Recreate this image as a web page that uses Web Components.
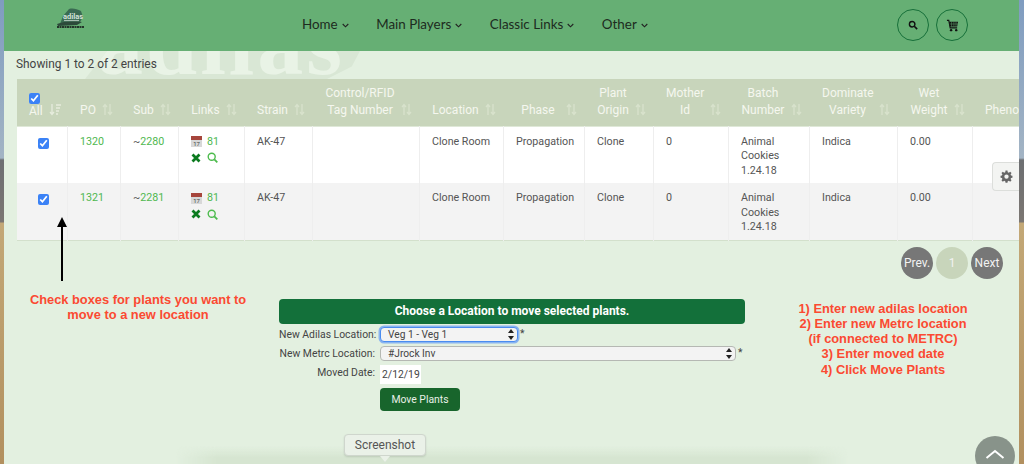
<!DOCTYPE html>
<html>
<head>
<meta charset="utf-8">
<title>Move plants</title>
<style>
  html, body { margin: 0; height: 464px; overflow: hidden; }
  body {
    background: linear-gradient(to bottom, #7f9cc0 0, #a3b4c4 158px, #6d6f72 160px, #7b7672 222px, #c3a877 223px, #b2905f 464px);
    font-family: Roboto, sans-serif;
  }
</style>
</head>
<body>
<app-shell>
  <top-nav slot="nav"></top-nav>
  <span slot="count">Showing 1 to 2 of 2 entries</span>
  <plant-table slot="table"></plant-table>
  <page-buttons slot="pager"></page-buttons>
  <red-note slot="left">Check boxes for plants you want to<br>move to a new location</red-note>
  <move-form slot="form"></move-form>
  <red-note slot="right" style="padding:9px 18px 0 0">1) Enter new adilas location<br>2) Enter new Metrc location<br>(if connected to METRC)<br>3) Enter moved date<br>4) Click Move Plants</red-note>
</app-shell>

<script>
// main frame, with the things that float over it
class AppShell extends HTMLElement {
  constructor() {
    super();
    this.attachShadow({ mode: "open" });
    this.shadowRoot.innerHTML = `
    <style>
      :host {
        display: block;
        position: relative;
        margin-left: 4px;
        width: 1015px;
        height: 464px;
        overflow: hidden;
        background: #e3f0e0;
      }
      .mark {
        position: absolute;
        left: 81px;
        top: 51px;
        width: 275px;
        height: 28px;
        overflow: hidden;
        background: #d9e7d5;
        clip-path: polygon(0 100%, 8% 0, 100% 0, 97% 55%, 88% 100%);
      }
      .mark span {
        position: absolute;
        left: 12px;
        top: -54px;
        font: bold 92px/92px "Liberation Serif", serif;
        letter-spacing: 3px;
        color: #e9f3e6;
      }
      .ground {
        position: absolute;
        left: 172px;
        top: 446px;
        width: 672px;
        height: 18px;
        background: linear-gradient(to bottom, rgba(214,229,209,0), #d6e5d1 65%);
        -webkit-mask-image: linear-gradient(to right, transparent, #000 6%, #000 94%, transparent);
      }
      .page { position: relative; }
      .count {
        padding: 6px 0 0 12px;
        height: 22px;
        font-size: 11.900px;
        line-height: 15px;
        color: #444;
      }
      .table { margin-left: 13px; }
      .pager { display: flex; justify-content: flex-end; padding: 6px 16px 0 0; }
      .lower {
        display: grid;
        grid-template-columns: 242px 466px 1fr;
        column-gap: 20px;
        margin: 13px 0 0 13px;
      }
      .arrow { position: absolute; left: 49px; top: 216px; }
      .gear {
        position: absolute;
        right: 0;
        top: 162px;
        width: 26px;
        height: 27px;
        display: flex;
        align-items: center;
        justify-content: center;
        background: #f3f4f2;
        border: 1px solid #dcdedb;
        border-right: 0;
        border-radius: 4px 0 0 4px;
      }
      .up {
        position: absolute;
        left: 971px;
        top: 436px;
        width: 40px;
        height: 40px;
        border-radius: 50%;
        background: #88938a;
        display: flex;
        justify-content: center;
      }
      .tip {
        position: absolute;
        left: 340px;
        top: 434px;
        width: 80px;
        height: 20px;
        line-height: 20px;
        text-align: center;
        font-size: 12px;
        color: #555;
        background: #eaf1e8;
        border: 1px solid #cfd6cd;
        border-radius: 4px;
        box-shadow: 0 1px 2px rgba(0,0,0,.12);
      }
      .tip::after {
        content: "";
        position: absolute;
        left: 35px;
        top: 21px;
        border: 5px solid transparent;
        border-top: 6px solid #eaf1e8;
        border-bottom: 0;
      }
    </style>
    <div class="mark"><span>adilas</span></div>
    <div class="ground"></div>
    <div class="page">
      <slot name="nav"></slot>
      <div class="count"><slot name="count"></slot></div>
      <div class="table"><slot name="table"></slot></div>
      <div class="pager"><slot name="pager"></slot></div>
      <div class="lower">
        <slot name="left"></slot>
        <slot name="form"></slot>
        <slot name="right"></slot>
      </div>
    </div>
    <svg class="arrow" width="18" height="66" viewBox="0 0 18 66">
      <path d="M9 1 L14 11 L10 11 L10 65 L8 65 L8 11 L4 11 Z" fill="#000"/>
    </svg>
    <div class="gear">
      <svg width="13" height="13" viewBox="0 0 24 24"><path fill="#666" d="M13.8 1h-3.6l-.5 3a8 8 0 0 0-2 .9L5.200 3.100 2.700 5.600l1.800 2.500a8 8 0 0 0-.9 2L1 10.600v3.500l2.600.5c.2.700.5 1.400.9 2l-1.800 2.500 2.500 2.500 2.500-1.800c.6.400 1.300.7 2 .9l.5 2.800h3.600l.5-2.800c.7-.2 1.400-.5 2-.9l2.500 1.800 2.500-2.500-1.800-2.500c.4-.6.700-1.300.9-2l2.600-.5v-3.500l-2.600-.5a8 8 0 0 0-.9-2l1.800-2.500-2.500-2.500-2.500 1.800a8 8 0 0 0-2-.9zM12 8.200a4 4 0 1 1 0 8 4 4 0 0 1 0-8z"/></svg>
    </div>
    <div class="tip">Screenshot</div>
    <div class="up">
      <svg width="20" height="12" viewBox="0 0 20 12" style="margin-top:12px"><path d="M1.500 10 L10 3 L18.500 10" fill="none" stroke="#fff" stroke-width="2"/></svg>
    </div>
    `;
  }
}

class TopNav extends HTMLElement {
  constructor() {
    super();
    this.attachShadow({ mode: "open" });
    const chev = `<svg width="7" height="5" viewBox="0 0 7 5"><path d="M.7 1 L3.500 3.800 L6.300 1" fill="none" stroke="#222" stroke-width="1.100"/></svg>`;
    this.shadowRoot.innerHTML = `
    <style>
      :host {
        display: flex;
        align-items: flex-start;
        height: 51px;
        background: #66af74;
        box-sizing: border-box;
        font-family: Lato, sans-serif;
        font-size: 13.400px;
        color: #1d2b20;
      }
      .logo { margin: 8px 0 0 51px; width: 31px; height: 21px; }
      ul {
        display: flex;
        gap: 27.500px;
        list-style: none;
        margin: 16px 0 0 216px;
        padding: 0;
        line-height: 17px;
      }
      li { display: flex; align-items: center; gap: 4px; white-space: nowrap; }
      li svg { margin-top: 2px; }
      .round { display: flex; gap: 7px; margin: 9px 0 0 auto; padding-right: 51px; }
      .round span {
        width: 30px;
        height: 30px;
        border: 1px solid #17703a;
        border-radius: 50%;
        display: flex;
        align-items: center;
        justify-content: center;
      }
    </style>
    <svg class="logo" viewBox="0 0 31 21">
      <path d="M14 1 C18 0 22 1 26 3 L28 9 L25 14 L5 16 L8 8 Z" fill="#3a6b52"/>
      <path d="M2 16 C8 13 20 13 27 14 L22 17 L3 18 Z" fill="#2c4a3a"/>
      <text x="8" y="11" font-size="7.500" font-weight="700" font-family="Roboto, sans-serif" fill="#d5e2da">adilas</text>
      <path d="M9 12.500 H24" stroke="#a9c0b3" stroke-width="1.200"/>
      <path d="M2 19 H29" stroke="#24352a" stroke-width="1.800" stroke-dasharray="2 .5"/>
    </svg>
    <ul>
      <li>Home ${chev}</li>
      <li>Main Players ${chev}</li>
      <li>Classic Links ${chev}</li>
      <li>Other ${chev}</li>
    </ul>
    <div class="round">
      <span><svg width="10" height="10" viewBox="0 0 12 12"><circle cx="5" cy="5" r="3.300" fill="none" stroke="#111" stroke-width="1.700"/><path d="M7.500 7.500 L11 11" stroke="#111" stroke-width="2"/></svg></span>
      <span><svg width="13" height="13" viewBox="0 0 14 14"><path d="M1 1.500 H3 L4.500 9.500 H12" fill="none" stroke="#111" stroke-width="1.200"/><path d="M3.500 3 H13 L12 8 H4.300 Z" fill="#111"/><path d="M6 3 V8 M8.500 3 V8 M10.800 3 V8 M4 5.400 H13" stroke="#66af74" stroke-width=".5"/><circle cx="5.500" cy="12" r="1.300" fill="#111"/><circle cx="11" cy="12" r="1.300" fill="#111"/></svg></span>
    </div>
    `;
  }
}

class PlantTable extends HTMLElement {
  constructor() {
    super();
    this.attachShadow({ mode: "open" });

    const widths = [50, 53, 58, 66, 68, 107, 84, 81, 69, 75, 81, 88, 75, 60];
    const heads = [
      "PO", "Sub", "Links", "Strain", "Control/RFID<br>Tag Number", "Location", "Phase",
      "Plant<br>Origin", "Mother<br>Id", "Batch<br>Number", "Dominate<br>Variety", "Wet<br>Weight"
    ];
    const sort = `<svg class="sort" width="11" height="13" viewBox="0 0 11 13"><path d="M3 12 V2 M1 4 L3 1.500 L5 4 M8 1 V11 M6 9 L8 11.500 L10 9" fill="none" stroke="#d8e2cc" stroke-width="1.300"/></svg>`;
    const sortAll = `<svg class="sort" style="right:5px" width="13" height="13" viewBox="0 0 13 13"><path d="M3 1 V11 M1 9 L3 11.500 L5 9" fill="none" stroke="#e6ecdd" stroke-width="1.300"/><path d="M7 2 H12 M7 5 H11 M7 8 H10 M7 11 H9" stroke="#e6ecdd" stroke-width="1.300"/></svg>`;

    const rows = [
      { po: 1320, sub: 2280 },
      { po: 1321, sub: 2281 }
    ];
    const cal = `<svg width="11" height="11" viewBox="0 0 11 11"><rect width="11" height="11" fill="#d8d8d8"/><rect width="11" height="4" fill="#a6453c"/><text x="5.500" y="10" font-size="6" font-family="Roboto, sans-serif" text-anchor="middle" fill="#444">17</text></svg>`;
    const ex = `<svg width="10" height="10" viewBox="0 0 10 10"><path d="M1.500 1.500 L8.500 8.500 M8.500 1.500 L1.500 8.500" stroke="#0b7a1f" stroke-width="2.800"/></svg>`;
    const mag = `<svg width="11" height="11" viewBox="0 0 11 11"><circle cx="4.700" cy="4.700" r="3.500" fill="none" stroke="#4dbb4d" stroke-width="1.400"/><path d="M7.300 7.300 L10.300 10.300" stroke="#4dbb4d" stroke-width="1.800"/></svg>`;

    this.shadowRoot.innerHTML = `
    <style>
      :host { display: block; overflow: hidden; }
      table {
        border-collapse: collapse;
        table-layout: fixed;
        width: ${widths.reduce((a, b) => a + b)}px;
        font-size: 10.700px;
        line-height: 14.500px;
        color: #555;
      }
      thead th {
        background: #c8d5bb;
        color: #f5f7ef;
        font-weight: 400;
        font-size: 12px;
        line-height: 17px;
        height: 47px;
        padding: 0 24px 7px 13px;
        box-sizing: border-box;
        vertical-align: bottom;
        text-align: center;
        white-space: nowrap;
        position: relative;
      }
      thead th.l { text-align: left; padding-right: 0; }
      .sort { position: absolute; right: 7px; bottom: 10px; }
      th.all { padding: 0 0 7px 12px; text-align: left; line-height: 15px; }
      td {
        height: 57px;
        box-sizing: border-box;
        padding: 8px 8px 0 12.500px;
        vertical-align: top;
        border-left: 1px solid #eeeeee;
      }
      td:first-child { border-left: 0; padding: 11px 0 0; }
      tbody tr:nth-child(1) { background: #fff; }
      tbody tr:nth-child(2) { background: #f3f3f3; }
      tbody { border-top: 1px solid #dfe8d8; border-bottom: 1px solid #d3e0cc; }
      input { margin: 0; width: 11px; height: 11px; accent-color: #3b82f6; display: block; }
      td:first-child input { margin: 0 auto 0 21px; }
      .g { color: #4fb84f; }
      .icons { display: flex; align-items: center; gap: 5px; }
      .icons.two { margin-top: 3px; gap: 6px; }
    </style>
    <table>
      <colgroup>${widths.map(w => `<col style="width:${w}px">`).join("")}</colgroup>
      <thead>
        <tr>
          <th class="all"><input type="checkbox" checked>All${sortAll}</th>
          ${heads.map(h => `<th>${h}${sort}</th>`).join("")}
          <th class="l">Pheno</th>
        </tr>
      </thead>
      <tbody>
        ${rows.map(r => `
        <tr>
          <td><input type="checkbox" checked></td>
          <td class="g">${r.po}</td>
          <td>~<span class="g">${r.sub}</span></td>
          <td>
            <div class="icons">${cal}<span class="g">81</span></div>
            <div class="icons two">${ex}${mag}</div>
          </td>
          <td>AK-47</td>
          <td></td>
          <td>Clone Room</td>
          <td>Propagation</td>
          <td>Clone</td>
          <td>0</td>
          <td>Animal Cookies 1.24.18</td>
          <td>Indica</td>
          <td>0.00</td>
          <td></td>
        </tr>`).join("")}
      </tbody>
    </table>
    `;
  }
}

class PageButtons extends HTMLElement {
  constructor() {
    super();
    this.attachShadow({ mode: "open" });
    this.shadowRoot.innerHTML = `
    <style>
      :host { display: flex; gap: 3px; font-size: 12px; color: #f2f2f2; }
      span {
        width: 32px;
        height: 32px;
        border-radius: 50%;
        background: #777;
        display: flex;
        align-items: center;
        justify-content: center;
      }
      .on { background: #c8d5bb; }
    </style>
    <span>Prev.</span><span class="on">1</span><span>Next</span>
    `;
  }
}

class RedNote extends HTMLElement {
  constructor() {
    super();
    this.attachShadow({ mode: "open" });
    this.shadowRoot.innerHTML = `
    <style>
      :host {
        display: block;
        text-align: center;
        white-space: nowrap;
        font: bold 12.850px/15.300px "Liberation Sans", sans-serif;
        color: #fb4a32;
      }
    </style>
    <slot></slot>
    `;
  }
}

class FormSelect extends HTMLElement {
  constructor() {
    super();
    this.attachShadow({ mode: "open" });
    this.shadowRoot.innerHTML = `
    <style>
      :host {
        display: flex;
        align-items: center;
        justify-content: space-between;
        box-sizing: border-box;
        height: 15px;
        padding: 0 3px 0 7px;
        background: #f3f3f3;
        border: 1px solid #b5b8b3;
        border-radius: 4px;
        font-size: 10.200px;
        color: #444;
      }
      :host([focus]) { border-color: #4a8cf0; box-shadow: 0 0 0 1.500px #8ab4f0; }
    </style>
    <slot></slot>
    <svg width="6" height="11" viewBox="0 0 6 11"><path d="M3 0 L6 4 H0 Z M3 11 L0 7 H6 Z" fill="#222"/></svg>
    `;
  }
}

class MoveForm extends HTMLElement {
  constructor() {
    super();
    this.attachShadow({ mode: "open" });
    this.shadowRoot.innerHTML = `
    <style>
      :host { display: block; font-size: 10.400px; color: #444; padding-top: 7px; }
      .bar {
        height: 25px;
        line-height: 25px;
        text-align: center;
        background: #13703a;
        color: #fff;
        font-size: 12px;
        font-weight: 700;
        border-radius: 4px;
      }
      .grid {
        display: grid;
        grid-template-columns: 96px 1fr;
        column-gap: 5px;
        row-gap: 4px;
        margin-top: 3px;
        align-items: center;
      }
      label { text-align: right; line-height: 15px; white-space: nowrap; }
      .field { display: flex; align-items: flex-start; gap: 2px; }
      .date {
        box-sizing: border-box;
        width: 41px;
        height: 19px;
        line-height: 19px;
        padding-left: 2px;
        background: #fff;
        color: #444;
      }
      .go {
        width: 80px;
        height: 23px;
        line-height: 23px;
        text-align: center;
        background: #18652c;
        color: #e8f0e8;
        border-radius: 4px;
      }
      .top { align-self: start; margin-top: 0; }
    </style>
    <div class="bar">Choose a Location to move selected plants.</div>
    <div class="grid">
      <label>New Adilas Location:</label>
      <div class="field"><form-select focus style="width:138px">Veg 1 - Veg 1</form-select>*</div>
      <label>New Metrc Location:</label>
      <div class="field"><form-select style="width:356px">#Jrock Inv</form-select>*</div>
      <label class="top">Moved Date:</label>
      <div class="field"><div class="date">2/12/19</div></div>
      <span></span>
      <div class="field"><div class="go">Move Plants</div></div>
    </div>
    `;
  }
}

customElements.define("app-shell", AppShell);
customElements.define("top-nav", TopNav);
customElements.define("plant-table", PlantTable);
customElements.define("page-buttons", PageButtons);
customElements.define("red-note", RedNote);
customElements.define("form-select", FormSelect);
customElements.define("move-form", MoveForm);
</script>
</body>
</html>
